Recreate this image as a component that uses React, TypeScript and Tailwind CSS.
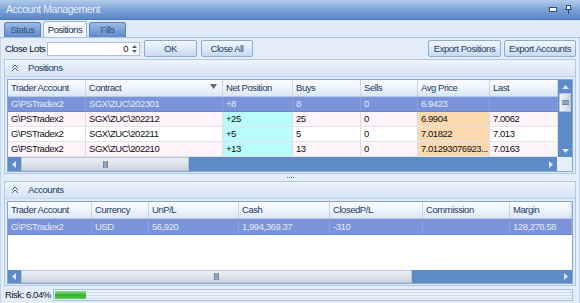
import React from "react";

const posCols = [78, 137, 70, 68, 57, 72, 68];
const accCols = [84, 57, 90, 91, 93, 87, 62];

function Btn({ w, children }: { w: string; children: React.ReactNode }) {
  return (
    <div
      className={`${w} h-[17px] flex items-center justify-center border border-[#8eabd3] rounded-[2px] bg-gradient-to-b from-[#f3f7fd] via-[#dfe9f7] to-[#c8daf0] text-[#1f3d6b] whitespace-nowrap`}
    >
      {children}
    </div>
  );
}

function Collapse() {
  return (
    <svg width="8" height="8" viewBox="0 0 8 8" className="shrink-0">
      <path d="M1 4 L4 1 L7 4" fill="none" stroke="#4a5f80" strokeWidth="1" />
      <path d="M1 7 L4 4 L7 7" fill="none" stroke="#4a5f80" strokeWidth="1" />
    </svg>
  );
}

function HScroll({ thumbW }: { thumbW: string }) {
  return (
    <div className="h-full flex items-stretch bg-[#5d8bc8]">
      <div className="w-[13px] flex items-center justify-center">
        <svg width="5" height="7" viewBox="0 0 5 7">
          <path d="M4 0 L0 3.5 L4 7 Z" fill="#dfe8f5" />
        </svg>
      </div>
      <div className={`${thumbW} flex items-center justify-center bg-gradient-to-b from-[#eef1f5] via-[#dde3ea] to-[#c9d2dd] border border-[#b9c4d2]`}>
        <div className="w-[5px] h-[7px] bg-[#8fa4c0] border-x border-[#6f86a6]" />
      </div>
      <div className="flex-1" />
      <div className="w-[13px] flex items-center justify-center">
        <svg width="5" height="7" viewBox="0 0 5 7">
          <path d="M1 0 L5 3.5 L1 7 Z" fill="#dfe8f5" />
        </svg>
      </div>
    </div>
  );
}

type Cell = { t: string; bg?: string };

function Row({ cells, cols, h, sel, bg }: { cells: Cell[]; cols: number[]; h: string; sel?: boolean; bg: string }) {
  return (
    <div className={`flex ${h} border-b ${sel ? "border-[#6c86cc] bg-[#7b94d9] text-[#e3e9f8]" : `border-[#e2e2ea] ${bg} text-[#111]`}`}>
      {cells.map((c, i) => (
        <div
          key={i}
          style={{ width: cols[i] }}
          className={`shrink-0 pl-[3px] flex items-center overflow-hidden whitespace-nowrap border-r ${sel ? "border-[#8ea3de]" : "border-[#dcdde6]"} ${!sel && c.bg ? c.bg : ""}`}
        >
          {c.t}
        </div>
      ))}
    </div>
  );
}

function Header({ labels, cols, h, filterAt }: { labels: string[]; cols: number[]; h: string; filterAt?: number }) {
  return (
    <div className={`flex ${h} border-b border-[#b6c9e3] bg-gradient-to-b from-[#f9fbfe] via-[#eef4fb] to-[#dbe6f4] text-[#1d3a62]`}>
      {labels.map((l, i) => (
        <div
          key={i}
          style={{ width: cols[i] }}
          className="shrink-0 pl-[3px] relative flex items-center border-r border-[#c7d6ea] whitespace-nowrap overflow-hidden"
        >
          {l}
          {filterAt === i && (
            <svg width="7" height="5" viewBox="0 0 7 5" className="absolute right-[5px] top-[4px]">
              <path d="M0 0 L7 0 L3.5 5 Z" fill="#5a6b85" />
            </svg>
          )}
        </div>
      ))}
    </div>
  );
}

export default function App() {
  const posRows: { cells: Cell[]; sel?: boolean; bg: string }[] = [
    {
      sel: true,
      bg: "",
      cells: [
        { t: "G\\PSTradex2" },
        { t: "SGX\\ZUC\\202301" },
        { t: "+8" },
        { t: "8" },
        { t: "0" },
        { t: "6.9423" },
        { t: "" },
      ],
    },
    {
      bg: "bg-[#fdf4f9]",
      cells: [
        { t: "G\\PSTradex2" },
        { t: "SGX\\ZUC\\202212" },
        { t: "+25", bg: "bg-[#bafcfc]" },
        { t: "25" },
        { t: "0" },
        { t: "6.9904", bg: "bg-[#fdd9b0]" },
        { t: "7.0062" },
      ],
    },
    {
      bg: "bg-white",
      cells: [
        { t: "G\\PSTradex2" },
        { t: "SGX\\ZUC\\202211" },
        { t: "+5", bg: "bg-[#bafcfc]" },
        { t: "5" },
        { t: "0" },
        { t: "7.01822", bg: "bg-[#fdd9b0]" },
        { t: "7.013" },
      ],
    },
    {
      bg: "bg-[#fdf4f9]",
      cells: [
        { t: "G\\PSTradex2" },
        { t: "SGX\\ZUC\\202210" },
        { t: "+13", bg: "bg-[#bafcfc]" },
        { t: "13" },
        { t: "0" },
        { t: "7.01293076923...", bg: "bg-[#fdd9b0]" },
        { t: "7.0163" },
      ],
    },
  ];

  return (
    <div className="w-[580px] h-[303px] overflow-hidden flex flex-col bg-[#d3e1f3] font-['Liberation_Sans',Arial,sans-serif] text-[9.5px] tracking-[-0.45px] leading-none">
      {/* Title bar */}
      <div className="h-[20px] shrink-0 flex items-center pl-[6px] pr-[8px] bg-gradient-to-b from-[#b3cbea] via-[#7ea3d9] to-[#5a87c7] text-[#e6eefa] text-[10.5px] border-b border-[#4f79b4]">
        <span>Account Management</span>
        <div className="ml-auto flex items-center gap-[8px]">
          <div className="w-[8px] h-[5px] bg-white border border-[#2c4b78]" />
          <svg width="7" height="9" viewBox="0 0 7 9">
            <rect x="1.5" y="0.5" width="4" height="4" fill="#fff" stroke="#2c4b78" />
            <path d="M0 4.5 H7" stroke="#2c4b78" />
            <path d="M3.5 5 V9" stroke="#2c4b78" />
          </svg>
        </div>
      </div>

      {/* Tab strip */}
      <div className="h-[18px] shrink-0 flex items-end pl-[4px] gap-[2px] bg-[#dfe9f7] border-b border-[#a9c0df]">
        <div className="w-[37px] h-[15px] flex items-center justify-center rounded-t-[3px] border border-b-0 border-[#5b80ba] bg-gradient-to-b from-[#9cbbe6] to-[#5f8bcb] text-[#34547f]">
          Status
        </div>
        <div className="w-[44px] h-[16px] flex items-center justify-center rounded-t-[3px] border border-b-0 border-[#9db5d8] bg-[#f2f7fd] text-[#1a2f4f]">
          Positions
        </div>
        <div className="w-[37px] h-[15px] flex items-center justify-center rounded-t-[3px] border border-b-0 border-[#5b80ba] bg-gradient-to-b from-[#9cbbe6] to-[#5f8bcb] text-[#34547f]">
          Fills
        </div>
      </div>

      {/* Body */}
      <div className="flex-1 flex flex-col bg-[#e3edf9] px-[3px] border-x border-[#c2d5ee]">
        {/* Toolbar */}
        <div className="h-[21px] shrink-0 flex items-center text-[#111]">
          <span className="pl-[1px] w-[43px] whitespace-nowrap">Close Lots</span>
          <div className="w-[93px] h-[14px] flex items-center justify-end bg-white border border-[#aac0dd] pr-[2px]">
            <span>0</span>
            <div className="ml-[4px] flex flex-col gap-[2px]">
              <svg width="5" height="3" viewBox="0 0 5 3"><path d="M0 3 L2.5 0 L5 3 Z" fill="#4a5d7a" /></svg>
              <svg width="5" height="3" viewBox="0 0 5 3"><path d="M0 0 L5 0 L2.5 3 Z" fill="#4a5d7a" /></svg>
            </div>
          </div>
          <div className="ml-[4px]">
            <Btn w="w-[53px]">OK</Btn>
          </div>
          <div className="ml-[4px]">
            <Btn w="w-[52px]">Close All</Btn>
          </div>
          <div className="ml-auto flex gap-[3px]">
            <Btn w="w-[73px]">Export Positions</Btn>
            <Btn w="w-[72px]">Export Accounts</Btn>
          </div>
        </div>

        {/* Positions panel */}
        <div className="shrink-0 flex flex-col border border-[#b3c8e4] bg-[#dfeaf8]">
          <div className="h-[17px] flex items-center pl-[6px] gap-[9px] bg-gradient-to-b from-[#eef4fc] to-[#d6e3f4] text-[#1f3c66] border-b border-[#c3d4ea]">
            <Collapse />
            <span>Positions</span>
          </div>
          <div className="p-[2px] pb-[1px]">
            <div className="border border-[#89a6cf] bg-white flex flex-col">
              <div className="flex">
                <div className="flex flex-col">
                  <Header
                    labels={["Trader Account", "Contract", "Net Position", "Buys", "Sells", "Avg Price", "Last"]}
                    cols={posCols}
                    h="h-[17px]"
                    filterAt={1}
                  />
                  {posRows.map((r, i) => (
                    <Row key={i} cells={r.cells} cols={posCols} h="h-[15px]" sel={r.sel} bg={r.bg} />
                  ))}
                </div>
                <div className="w-[15px] flex flex-col bg-[#5d8bc8]">
                  <div className="h-[13px] flex items-center justify-center">
                    <svg width="7" height="4" viewBox="0 0 7 4"><path d="M0 4 L3.5 0 L7 4 Z" fill="#dfe8f5" /></svg>
                  </div>
                  <div className="h-[19px] mx-[1px] flex items-center justify-center bg-gradient-to-r from-[#eef1f5] via-[#dfe5ec] to-[#c9d2dd] border border-[#b9c4d2]">
                    <div className="w-[7px] h-[5px] bg-[#8fa4c0] border-y border-[#6f86a6]" />
                  </div>
                  <div className="flex-1" />
                  <div className="h-[12px] flex items-center justify-center">
                    <svg width="7" height="4" viewBox="0 0 7 4"><path d="M0 0 L7 0 L3.5 4 Z" fill="#dfe8f5" /></svg>
                  </div>
                </div>
              </div>
              <div className="flex h-[14px]">
                <div className="flex-1">
                  <HScroll thumbW="w-[168px]" />
                </div>
                <div className="w-[15px] bg-[#e6eef8]" />
              </div>
            </div>
          </div>
        </div>

        {/* Splitter */}
        <div className="h-[7px] shrink-0 flex items-center justify-center">
          <div className="flex gap-[1px]">
            <div className="w-[1px] h-[1px] bg-[#5a79a8]" />
            <div className="w-[1px] h-[1px] bg-[#5a79a8]" />
            <div className="w-[1px] h-[1px] bg-[#5a79a8]" />
            <div className="w-[1px] h-[1px] bg-[#5a79a8]" />
          </div>
        </div>

        {/* Accounts panel */}
        <div className="shrink-0 flex flex-col border border-[#b3c8e4] bg-[#dfeaf8]">
          <div className="h-[17px] flex items-center pl-[6px] gap-[9px] bg-gradient-to-b from-[#eef4fc] to-[#d6e3f4] text-[#1f3c66] border-b border-[#c3d4ea]">
            <Collapse />
            <span>Accounts</span>
          </div>
          <div className="p-[2px] pb-[1px]">
            <div className="border border-[#89a6cf] bg-white flex flex-col">
              <Header
                labels={["Trader Account", "Currency", "UnP/L", "Cash", "ClosedP/L", "Commission", "Margin"]}
                cols={accCols}
                h="h-[17px]"
              />
              <Row
                cells={[
                  { t: "G\\PSTradex2" },
                  { t: "USD" },
                  { t: "56,920" },
                  { t: "1,994,369.37" },
                  { t: "-310" },
                  { t: "" },
                  { t: "128,278.58" },
                ]}
                cols={accCols}
                h="h-[16px]"
                sel
                bg=""
              />
              <div className="h-[35px] bg-white" />
              <div className="h-[13px]">
                <HScroll thumbW="w-[391px]" />
              </div>
            </div>
          </div>
        </div>

        {/* Risk */}
        <div className="h-[18px] shrink-0 flex items-center text-[#111]">
          <span className="pl-[1px] w-[49px] whitespace-nowrap">Risk: 6.04%</span>
          <div className="flex-1 h-[12px] border border-[#a9bfdb] bg-[repeating-linear-gradient(180deg,#e9f0f9_0px,#e9f0f9_2px,#cfdcee_2px,#cfdcee_3px)] p-[1px] mr-[3px]">
            <div className="w-[31px] h-full bg-gradient-to-b from-[#8fe08a] via-[#2fae2a] to-[#5ccc55]" />
          </div>
        </div>
      </div>
      <div className="h-[2px] shrink-0 bg-[#c2d5ee]" />
    </div>
  );
}
